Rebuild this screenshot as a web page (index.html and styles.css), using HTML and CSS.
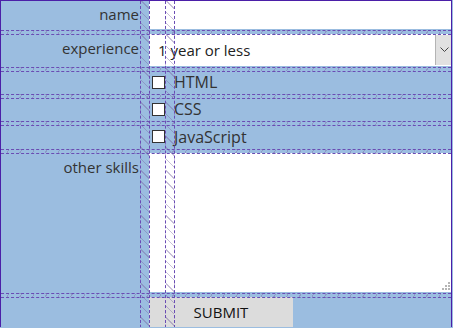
FILE: index.html
```html
<!DOCTYPE html>
<html lang="en">
<head>
    <meta charset="UTF-8">
    <meta name="viewport" content="width=device-width, initial-scale=1.0">
    <title>Signup Grid</title>
    <link rel="stylesheet" href="styles.css">
</head>
<body>
    <form class="signup">
        <label class="field-label" for="name">name</label>
        <input class="text-field" id="name" type="text">

        <label class="field-label" for="experience">experience</label>
        <div class="select-wrap">
            <select class="select-field" id="experience">
                <option>1 year or less</option>
                <option>2 to 5 years</option>
                <option>more than 5 years</option>
            </select>
            <span class="select-arrow">
                <svg width="9" height="6" viewBox="0 0 9 6"><path d="M0.5 0.5 L4.5 4.5 L8.5 0.5" fill="none" stroke="#444" stroke-width="1"/></svg>
            </span>
        </div>

        <input class="check" type="checkbox" id="html">
        <label class="check-label" for="html">HTML</label>
        <input class="check" type="checkbox" id="css">
        <label class="check-label" for="css">CSS</label>
        <input class="check" type="checkbox" id="js">
        <label class="check-label" for="js">JavaScript</label>

        <label class="field-label" for="skills">other skills</label>
        <div class="textarea-wrap">
            <textarea class="text-area" id="skills"></textarea>
            <svg class="grip" width="8" height="8" viewBox="0 0 8 8">
                <rect x="6" y="0" width="2" height="2" fill="#b5b5b5"/>
                <rect x="3" y="3" width="2" height="2" fill="#b5b5b5"/>
                <rect x="6" y="3" width="2" height="2" fill="#b5b5b5"/>
                <rect x="0" y="6" width="2" height="2" fill="#b5b5b5"/>
                <rect x="3" y="6" width="2" height="2" fill="#b5b5b5"/>
                <rect x="6" y="6" width="2" height="2" fill="#b5b5b5"/>
            </svg>
        </div>

        <button class="submit" type="button">SUBMIT</button>

        <!-- grid inspector overlay -->
        <div class="grid-overlay" aria-hidden="true">
            <div class="col-gap gap-a"></div>
            <div class="col-gap gap-b"></div>
            <div class="row-gap" style="grid-row: 2"></div>
            <div class="row-gap" style="grid-row: 4"></div>
            <div class="row-gap" style="grid-row: 6"></div>
            <div class="row-gap" style="grid-row: 8"></div>
            <div class="row-gap" style="grid-row: 10"></div>
            <div class="row-gap" style="grid-row: 12"></div>
            <div class="row-end"></div>
        </div>
    </form>
</body>
</html>
```

FILE: styles.css
```css
* {
    margin: 0;
    padding: 0;
    box-sizing: border-box;
}

body {
    background: #9bbde0;
    font-family: "Segoe UI", "Open Sans", sans-serif;
    color: #333;
}

.signup {
    position: relative;
    width: 452px;
    display: grid;
    grid-template-columns: 139px 15px 1fr;
    grid-template-rows: 29px 32px 22px 22px 23px 139px 30px;
    column-gap: 10px;
    row-gap: 5px;
}

.field-label {
    grid-column: 1;
    text-align: right;
    font-size: 15px;
    line-height: 20px;
    padding-top: 4px;
}

.text-field,
.select-wrap,
.textarea-wrap {
    grid-column: 2 / 4;
}

.text-field {
    border: none;
    background: white;
    font: inherit;
    font-size: 15px;
    padding: 0 8px;
    outline: none;
}

.select-wrap {
    position: relative;
    background: white;
}

.select-field {
    appearance: none;
    -webkit-appearance: none;
    width: 100%;
    height: 100%;
    border: none;
    background: white;
    font: inherit;
    font-size: 15px;
    color: #222;
    padding: 0 24px 0 9px;
    outline: none;
}

.select-arrow {
    position: absolute;
    top: 1px;
    right: 0;
    bottom: 1px;
    width: 17px;
    background: #e1e1e1;
    border-left: 1px solid #b4b4b4;
    display: flex;
    align-items: center;
    justify-content: center;
    pointer-events: none;
}

.check {
    grid-column: 2;
    appearance: none;
    -webkit-appearance: none;
    width: 13px;
    height: 13px;
    margin-left: 3px;
    align-self: center;
    background: white;
    border: 1px solid #333;
}

.check-label {
    grid-column: 3;
    align-self: center;
    font-size: 16px;
    line-height: 20px;
    color: #333;
}

.textarea-wrap {
    position: relative;
    background: white;
}

.text-area {
    width: 100%;
    height: 100%;
    border: none;
    resize: none;
    outline: none;
    font: inherit;
    display: block;
}

.grip {
    position: absolute;
    right: 2px;
    bottom: 2px;
}

.submit {
    grid-column: 2 / 4;
    width: 144px;
    border: none;
    background: #dcdcdc;
    font: inherit;
    font-size: 15px;
    color: #111;
}

/* devtools-like grid lines */
.grid-overlay {
    position: absolute;
    inset: 0;
    display: grid;
    grid-template-columns: 139px 10px 15px 10px 1fr;
    grid-template-rows: 29px 5px 32px 5px 22px 5px 22px 5px 23px 5px 139px 5px 30px;
    border: 1px solid #4b1fa8;
    border-bottom: none;
    pointer-events: none;
}

.col-gap {
    grid-row: 1 / -1;
    border-left: 1px dashed #6a4cb4;
    border-right: 1px dashed #6a4cb4;
    background: repeating-linear-gradient(45deg, transparent 0 7px, rgba(120, 100, 160, 0.4) 7px 8px);
}

.gap-a {
    grid-column: 2;
}

.gap-b {
    grid-column: 4;
}

.row-gap {
    grid-column: 1 / -1;
    border-top: 1px dashed #6a4cb4;
    border-bottom: 1px dashed #6a4cb4;
    background: repeating-linear-gradient(-60deg, transparent 0 10px, rgba(120, 100, 160, 0.4) 10px 11px);
}

.row-end {
    grid-row: 13;
    grid-column: 1 / -1;
    border-bottom: 1px dashed #6a4cb4;
}
```
